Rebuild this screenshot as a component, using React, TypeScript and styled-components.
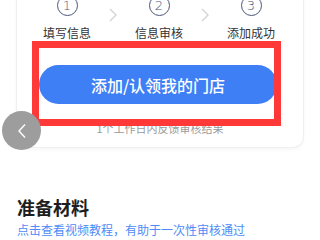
import React from "react";
import styled, { createGlobalStyle } from "styled-components";

const Global = createGlobalStyle`
  html, body { margin: 0; padding: 0; background: #ffffff; }
  body { font-family: "Noto Sans CJK SC", "Noto Sans", sans-serif; overflow: hidden; }
`;

const Page = styled.div`
  width: 320px;
  height: 240px;
  overflow: hidden;
  position: relative;
  background: #ffffff;
`;

const Inner = styled.div`
  margin-top: -5px;
`;

const Card = styled.div`
  position: relative;
  margin: 0 17px;
  background: #ffffff;
  border-radius: 0 0 10px 10px;
  box-shadow: 0 0 0 1px #f0f0f2, 0 2px 4px rgba(0, 0, 0, 0.05);
  padding: 0 0 11px;
`;

const Steps = styled.div`
  display: grid;
  grid-template-columns: 60px 32px 60px 32px 60px;
  padding-left: 20px;
  align-items: start;
`;

const Step = styled.div`
  display: flex;
  flex-direction: column;
  align-items: center;
`;

const Circle = styled.div`
  box-sizing: border-box;
  width: 21px;
  height: 21px;
  border-radius: 50%;
  border: 1.6px solid #4b5677;
  color: #4b5677;
  font-family: "DejaVu Sans", sans-serif;
  font-size: 13px;
  font-weight: 300;
  display: flex;
  align-items: center;
  justify-content: center;
  line-height: 1;
`;

const StepLabel = styled.div`
  margin-top: 9px;
  font-size: 12px;
  line-height: 16px;
  color: #333333;
  white-space: nowrap;
`;

const Chevron = styled.div`
  display: flex;
  justify-content: center;
  padding-top: 13px;
`;

const Button = styled.div`
  margin: 24px 26px 0 22px;
  height: 39px;
  border-radius: 20px;
  background: #3e7ff6;
  color: #ffffff;
  font-size: 16px;
  font-weight: 500;
  display: flex;
  align-items: center;
  justify-content: center;
`;

const Note = styled.div`
  margin-top: 17px;
  text-align: center;
  font-size: 11px;
  line-height: 15px;
  color: #9a9a9a;
`;

const Highlight = styled.div`
  position: absolute;
  left: 15px;
  top: 46px;
  width: 235px;
  height: 71px;
  border: 7px solid #ff3838;
`;

const BackButton = styled.div`
  position: absolute;
  left: 2px;
  top: 111px;
  width: 39px;
  height: 39px;
  border-radius: 50%;
  background: #9d9d9d;
  display: flex;
  align-items: center;
  justify-content: center;
`;

const Section = styled.div`
  padding: 48px 17px 0;
`;

const Heading = styled.div`
  font-size: 18px;
  font-weight: 700;
  line-height: 24px;
  color: #1e1e1e;
`;

const Link = styled.div`
  margin-top: 3px;
  font-size: 12px;
  line-height: 16px;
  color: #4d8cf6;
  white-space: nowrap;
`;

const Arrow = () => (
  <svg width="8" height="14" viewBox="0 0 8 14">
    <polyline points="1,1 7,7 1,13" fill="none" stroke="#d4d4d4" strokeWidth="1.4" />
  </svg>
);

const steps = ["填写信息", "信息审核", "添加成功"];

export default function App() {
  return (
    <Page>
      <Global />
      <Inner>
        <Card>
          <Steps>
            {steps.map((s, i) => (
              <React.Fragment key={s}>
                {i > 0 && (
                  <Chevron>
                    <Arrow />
                  </Chevron>
                )}
                <Step>
                  <Circle>{i + 1}</Circle>
                  <StepLabel>{s}</StepLabel>
                </Step>
              </React.Fragment>
            ))}
          </Steps>
          <Button>添加/认领我的门店</Button>
          <Note>1个工作日内反馈审核结果</Note>
          <Highlight />
        </Card>
        <Section>
          <Heading>准备材料</Heading>
          <Link>点击查看视频教程，有助于一次性审核通过</Link>
        </Section>
      </Inner>
      <BackButton>
        <svg width="10" height="16" viewBox="0 0 10 16">
          <polyline points="8,1.5 2,8 8,14.5" fill="none" stroke="#ffffff" strokeWidth="1.4" />
        </svg>
      </BackButton>
    </Page>
  );
}
